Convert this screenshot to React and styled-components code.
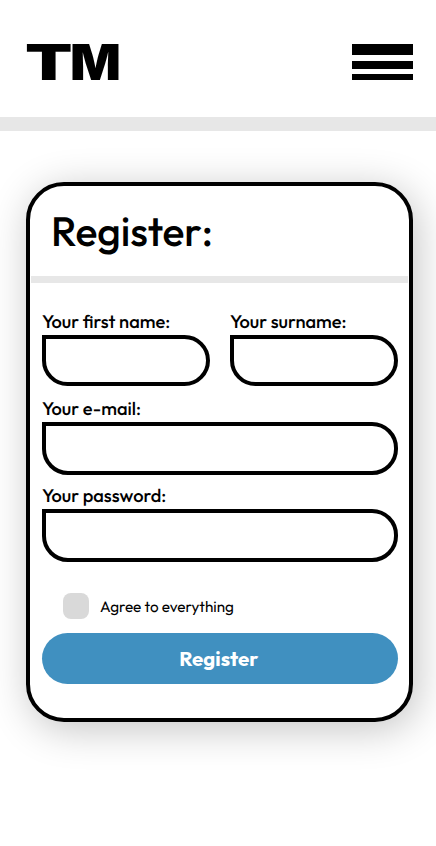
import React from 'react';
import styled, { createGlobalStyle } from 'styled-components';

const GlobalStyle = createGlobalStyle`
  *, *::before, *::after { box-sizing: border-box; }
  body {
    margin: 0;
    background: #fff;
    color: #000;
    font-family: Outfit, Lato, sans-serif;
    text-rendering: geometricPrecision;
    overflow: hidden;
  }
`;

const Page = styled.div`
  height: 846px;
  overflow: hidden;
`;

const Header = styled.header`
  display: flex;
  justify-content: space-between;
  align-items: flex-start;
  height: 131px;
  padding: 44px 23px 0 26.5px;
  border-bottom: 14px solid #e7e7e7;
`;

const Logo = styled.svg`
  display: block;
  width: 92px;
  height: 36px;
  overflow: visible;
  font-family: Inter, sans-serif;
  font-weight: 900;
  font-size: 49.5px;
`;

const MenuButton = styled.button`
  display: flex;
  flex-direction: column;
  justify-content: space-between;
  width: 61px;
  height: 36px;
  padding: 0;
  border: 0;
  background: none;
`;

const MenuBar = styled.span`
  height: ${({ $thickness }) => $thickness}px;
  background: #000;
`;

const Card = styled.main`
  width: 387px;
  height: 540px;
  margin: 51px 0 0 26.4px;
  border: 4px solid #000;
  border-radius: 38px;
  background: #fff;
  box-shadow: 4px 7px 40px rgba(0, 0, 0, 0.24);
`;

const CardHeader = styled.div`
  height: 97px;
  margin: 0 1px;
  padding: 19px 0 0 19.5px;
  border-bottom: 7px solid #e7e7e7;
`;

const Title = styled.h1`
  margin: 0;
  font-size: 41px;
  line-height: 52px;
  font-weight: 500;
  letter-spacing: -0.1px;
`;

const Form = styled.form`
  display: grid;
  grid-template-columns: 168px 168px;
  column-gap: 20px;
  padding: 26px 11.2px 0;
`;

const Field = styled.label`
  display: flex;
  flex-direction: column;
  grid-column: ${({ $wide }) => ($wide ? '1 / -1' : 'auto')};
  height: 87.2px;
`;

const Caption = styled.span`
  height: 26px;
  padding-left: 0.3px;
  font-size: 18.3px;
  line-height: 26px;
  font-weight: 500;
  white-space: nowrap;
`;

const Input = styled.input`
  width: 100%;
  height: ${({ $height }) => $height}px;
  padding: 0 14px;
  border: 4px solid #000;
  border-radius: 0 26px 26px 26px;
  background: #fff;
  font: inherit;
  outline: none;
`;

const Consent = styled.label`
  display: flex;
  align-items: center;
  gap: 11px;
  grid-column: 1 / -1;
  height: 26px;
  margin: 22.4px 0 14px 21px;
  font-size: 15.3px;
  font-weight: 400;
`;

const ConsentText = styled.span`
  padding: 1px 0 0 0.4px;
`;

const Checkbox = styled.input`
  appearance: none;
  width: 26px;
  height: 26px;
  margin: 0;
  border-radius: 8px;
  background: #d9d9d9;
`;

const Submit = styled.button`
  grid-column: 1 / -1;
  height: 51.4px;
  padding: 0 1.5px 1px 0;
  border: 0;
  border-radius: 26px;
  background: #4090c0;
  color: #fff;
  font-family: inherit;
  font-size: 20.5px;
  font-weight: 700;
`;

const fields = [
  { name: 'firstName', label: 'Your first name:', type: 'text', height: 51 },
  { name: 'surname', label: 'Your surname:', type: 'text', height: 51 },
  { name: 'email', label: 'Your e-mail:', type: 'email', height: 53, wide: true },
  { name: 'password', label: 'Your password:', type: 'password', height: 52.5, wide: true },
];

export default function App() {
  return (
    <Page>
      <GlobalStyle />
      <Header>
        <Logo viewBox="0 0 92 36" role="img" aria-label="TM">
          <text x="-2" y="36" textLength="47.5" lengthAdjust="spacingAndGlyphs">T</text>
          <text x="43" y="36" textLength="51" lengthAdjust="spacingAndGlyphs">M</text>
        </Logo>
        <MenuButton type="button" aria-label="Menu">
          <MenuBar $thickness={11.3} />
          <MenuBar $thickness={8.5} />
          <MenuBar $thickness={5.5} />
        </MenuButton>
      </Header>
      <Card>
        <CardHeader>
          <Title>Register:</Title>
        </CardHeader>
        <Form>
          {fields.map((f) => (
            <Field key={f.name} $wide={f.wide}>
              <Caption>{f.label}</Caption>
              <Input type={f.type} name={f.name} $height={f.height} />
            </Field>
          ))}
          <Consent>
            <Checkbox type="checkbox" />
            <ConsentText>Agree to everything</ConsentText>
          </Consent>
          <Submit type="button">Register</Submit>
        </Form>
      </Card>
    </Page>
  );
}
